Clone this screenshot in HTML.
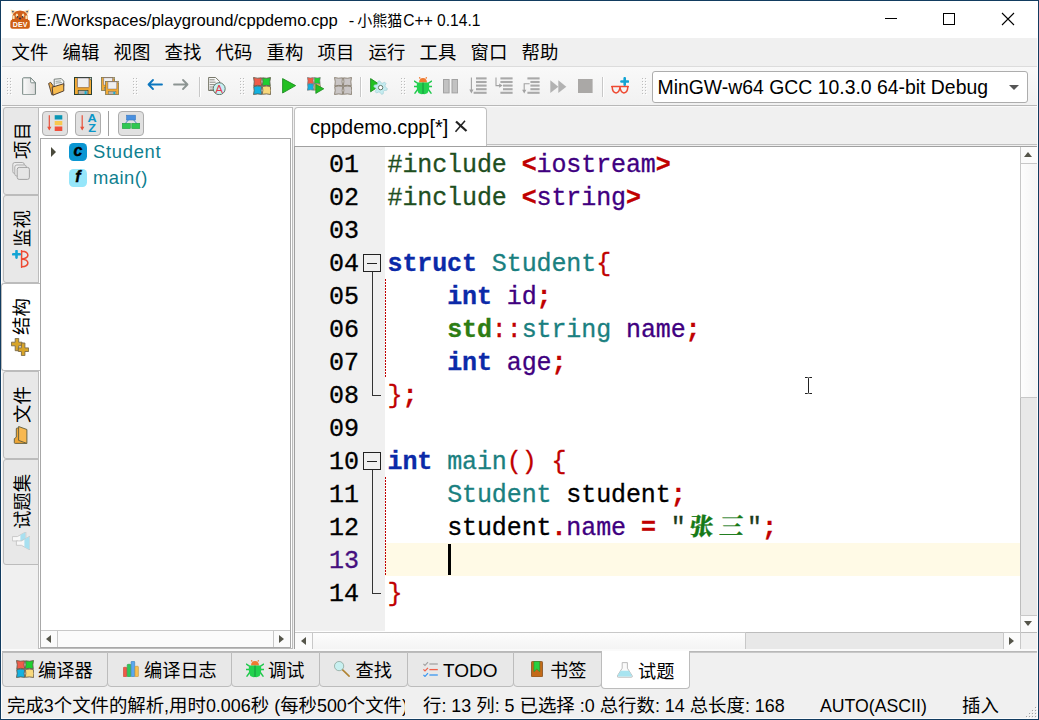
<!DOCTYPE html>
<html><head><meta charset="utf-8"><title>cppdemo</title>
<style>
*{box-sizing:border-box;margin:0;padding:0}
html,body{width:1039px;height:720px;overflow:hidden;background:#f0f0f0}
body{position:relative;font-family:"Liberation Sans","Noto Sans CJK SC",sans-serif;color:#000;font-size:18px}
.abs{position:absolute}
b{font-weight:normal}
#win{position:absolute;left:0;top:0;width:1039px;height:720px;border:1px solid #123c60;background:#f0f0f0;box-shadow:inset 0 0 0 1px #fcfcfc}
#title{position:absolute;left:1px;top:1px;width:1037px;height:37px;background:#fff}
#title .t{position:absolute;left:34.5px;top:8px;line-height:22px;white-space:pre}
#title .la{font-size:16.6px}
#title .lb{font-size:16.6px;margin-left:11px;margin-right:3px}
#title .cj{font-size:15px}
#title .lc{font-size:15.6px;margin-left:1px}
#menu{position:absolute;left:1px;top:38px;width:1036px;height:28px;background:#f0f0f0}
#menu span{position:absolute;top:1px;line-height:27px;font-size:18.4px;white-space:nowrap}
#tb{position:absolute;left:1px;top:66px;width:1037px;height:39px;background:linear-gradient(#f9f9f9,#f1f1f1);border-top:1px solid #dcdcdc}
#tbline{position:absolute;left:1px;top:105px;width:1037px;height:2px;background:#fafafa;border-top:1px solid #b8b8b8}
.grip{position:absolute;top:78px;width:1px;height:1px;background:#bcbcbc;box-shadow:1px 1px 0 #fff,0px 3px 0 #bcbcbc,1px 4px 0 #fff,0px 6px 0 #bcbcbc,1px 7px 0 #fff,0px 9px 0 #bcbcbc,1px 10px 0 #fff,0px 12px 0 #bcbcbc,1px 13px 0 #fff,0px 15px 0 #bcbcbc,1px 16px 0 #fff,3px 0px 0 #bcbcbc,4px 1px 0 #fff,3px 3px 0 #bcbcbc,4px 4px 0 #fff,3px 6px 0 #bcbcbc,4px 7px 0 #fff,3px 9px 0 #bcbcbc,4px 10px 0 #fff,3px 12px 0 #bcbcbc,4px 13px 0 #fff,3px 15px 0 #bcbcbc,4px 16px 0 #fff}
.vsep{position:absolute;top:77px;width:2px;height:20px;background:#fff;border-left:1px solid #c8c8c8}
#combo{position:absolute;left:652px;top:71px;width:376px;height:32px;border:1px solid #adadad;border-radius:3px;background:#fff}
#combo .t{position:absolute;left:4.5px;top:0;line-height:30px;font-size:19.4px;white-space:nowrap}
.vtab{position:absolute;left:3px;width:36px;background:#e8e8e8;border:1px solid #bcbcbc;border-radius:3px 0 0 3px}
.vtab.sel{left:1px;width:39px;background:#fff;border-right:none}
.vtab .r{position:absolute;left:-1px;transform-origin:0 0;transform:rotate(-90deg);white-space:nowrap;font-size:18.4px;display:flex;align-items:center;justify-content:center}
.vtab .r svg{margin-right:3px;flex:none}
.vtab .r span{line-height:20px;position:relative;top:1.5px}
#lpanel{position:absolute;left:38px;top:107px;width:255px;height:542px;background:#fff;border:1px solid #bcbcbc}
.pbtn{position:absolute;top:111px;width:26px;height:25px;background:#e1e1e1;border:1px solid #adadad;border-radius:4px}
#tree{position:absolute;left:40px;top:138px;width:251px;height:510px;background:#fff;border:1px solid #a8a8a8}
.ti{position:absolute;font-size:18.4px;line-height:26px;color:#0f7f8f;white-space:nowrap;letter-spacing:0.45px}
.ticon{position:absolute;width:18px;height:18px;border-radius:4.5px;text-align:center}
.ticon i{font-family:"Liberation Sans",sans-serif;font-weight:bold;font-style:italic;font-size:16px;line-height:15.500px;display:block;color:#000;-webkit-text-stroke:0.400px}
#etab{position:absolute;left:294px;top:107px;width:193px;height:39px;background:#fff;border:1px solid #c0c0c0;border-bottom:none;border-radius:4px 4px 0 0}
#etab .t{position:absolute;left:15px;top:0;line-height:38px;font-size:19.9px;white-space:nowrap}
#etabline{position:absolute;left:294px;top:144px;width:744px;height:1px;background:#c0c0c0}
#editor{position:absolute;left:294px;top:146px;width:744px;height:503px;background:#fff;border:1px solid #a0a0a0;border-right:none;border-bottom:none}
#gutter{position:absolute;left:295px;top:147px;width:90px;height:484px;background:#f0f0f0}
#code{position:absolute;left:295px;top:149px;width:725px;height:482px;font-family:"Liberation Mono","Noto Serif CJK SC",monospace;font-size:25px;letter-spacing:-0.1px;overflow:hidden;-webkit-text-stroke:0.3px}
#hl{position:absolute;left:385px;top:543px;width:635px;height:33px;background:#fffae6}
#caret{position:absolute;left:448px;top:544px;width:3px;height:31px;background:#000}
.ln{position:absolute;left:0;height:33px;width:725px;line-height:33px;white-space:pre}
.ln .n{position:absolute;left:34px;color:#000}
.ln .nc{color:#45107f}
.ln .c{position:absolute;left:92.5px}
.k{color:#0b2aa8;font-weight:bold}.p{color:#1f4f1f}.s{color:#c00000;font-weight:bold}.b{color:#c00000}.v{color:#400080}.t2{color:#1a8080}.ns{color:#2e7d14;font-weight:bold}.l{color:#000}.q{color:#1c3c1c}
.str{color:#177a17;font-weight:bold}
.str i{display:inline-block;width:30.7px;text-align:center;font-style:normal;font-size:24px;font-weight:900;transform:skewX(-6deg);letter-spacing:0;line-height:33px;vertical-align:top}
.fold{position:absolute;left:363px;width:18px;height:18px;border:1px solid #222;background:#f0f0f0}
.fold:after{content:"";position:absolute;left:3px;top:7.5px;width:10px;height:1px;background:#222}
.fl{position:absolute;background:#333}
.guide{position:absolute;left:385px;width:1px;background-image:repeating-linear-gradient(to bottom,#c00000 0,#c00000 2px,transparent 2px,transparent 3px)}
.sb{position:absolute;background:#e8e8e8}
.sbbtn{position:absolute;background:#fbfbfb;border:1px solid #c8c8c8}
.thumb{position:absolute;background:linear-gradient(to right,#fdfdfd,#f4f4f4);border:1px solid #c8c8c8}
.arr{position:absolute;width:0;height:0;border:4px solid transparent}
.arr.l{border-width:4.5px 5px 4.5px 0;border-right-color:#55554a}
.arr.r{border-width:4.5px 0 4.5px 5px;border-left-color:#55554a}
.arr.u{border-width:0 4.7px 5px 4.7px;border-bottom-color:#55554a}
.arr.d{border-width:5px 4.7px 0 4.7px;border-top-color:#55554a}
#bband{position:absolute;left:1px;top:649px;width:1037px;height:2px;background:#fafafa}
#btabs{position:absolute;left:1px;top:651px;width:1037px;height:2px;background:#b8b8b8;border-bottom:1px solid #c8c8c8}
.bt{position:absolute;top:652px;height:35px;background:#e8e8e8;border:1px solid #bcbcbc;border-radius:0 0 4px 4px}
.bt.sel{background:#fff;top:651px;height:38px;border-top:none}
.btt{position:absolute;font-size:18.2px;line-height:34px;white-space:nowrap}
.btt.lat{font-size:19px}
#status{position:absolute;left:1px;top:689px;width:1037px;height:30px;background:#f0f0f0}
.st{position:absolute;top:4px;line-height:26px;white-space:pre;font-size:18.4px}
.st b{font-size:17.9px}
.st b.u{font-size:17.7px}
#sgrip{position:absolute;left:1025px;top:18px;width:1px;height:1px;box-shadow:9px 0px 0 #a4a4a4,10px 1px 0 #fff,6px 3px 0 #a4a4a4,7px 4px 0 #fff,9px 3px 0 #a4a4a4,10px 4px 0 #fff,3px 6px 0 #a4a4a4,4px 7px 0 #fff,6px 6px 0 #a4a4a4,7px 7px 0 #fff,9px 6px 0 #a4a4a4,10px 7px 0 #fff,0px 9px 0 #a4a4a4,1px 10px 0 #fff,3px 9px 0 #a4a4a4,4px 10px 0 #fff,6px 9px 0 #a4a4a4,7px 10px 0 #fff,9px 9px 0 #a4a4a4,10px 10px 0 #fff}

#corner{position:absolute;left:1021px;top:633px;width:16px;height:16px;background:#f0f0f0}
.ib{position:absolute;background:#fcfcfc}

</style></head><body>
<div id="win"></div>
<div id="title"><span class="t"><span class="la">E:/Workspaces/playground/cppdemo.cpp</span><span class="lb">-</span><span class="cj">小熊猫</span><span class="lc">C++ 0.14.1</span></span>
<div class="abs" style="left:884px;top:17px;width:12px;height:1px;background:#000"></div>
<div class="abs" style="left:942px;top:12px;width:12px;height:12px;border:1px solid #000"></div>
<svg class="abs" style="left:1000px;top:11px" width="14" height="14" viewBox="0 0 14 14"><path d="M1 1l12 12M13 1l-12 12" stroke="#000" stroke-width="1.1"/></svg>
</div>
<svg class="abs" style="left:10px;top:9px;" width="20" height="20" viewBox="0 0 20 20"><path d="M2 5.800l-1.400-5.400 5.600 1.600zM18 5.800l1.400-5.400-5.600 1.600z" fill="#f8dca0"/>
<circle cx="2.900" cy="2.600" r="0.900" fill="#4a5078"/><circle cx="17.100" cy="2.600" r="0.900" fill="#4a5078"/>
<path d="M1.800 12q-0.600-10.600 8.200-10.600t8.200 10.600z" fill="#d0601a"/>
<rect x="0.300" y="10.800" width="19.500" height="9" rx="2.200" fill="#cf5f14"/>
<rect x="2.400" y="6.400" width="2.200" height="3.600" rx="0.600" fill="#f8e4b4"/><rect x="15.400" y="6.400" width="2.200" height="3.600" rx="0.600" fill="#f8e4b4"/>
<ellipse cx="6.900" cy="6.400" rx="1.200" ry="1.800" fill="#f8e4b4"/><ellipse cx="13.100" cy="6.400" rx="1.200" ry="1.800" fill="#f8e4b4"/>
<circle cx="7.400" cy="7.900" r="0.800" fill="#34303c"/><circle cx="12.600" cy="7.900" r="0.800" fill="#34303c"/>
<ellipse cx="10" cy="9.500" rx="1.200" ry="0.900" fill="#34384a"/>
<text x="10.100" y="18.300" font-family="Liberation Sans,sans-serif" font-weight="bold" font-size="8" fill="#fff" text-anchor="middle" textLength="14.500" lengthAdjust="spacingAndGlyphs">DEV</text></svg>
<div id="menu">
<span style="left:10.5px">文件</span>
<span style="left:61.5px">编辑</span>
<span style="left:112.5px">视图</span>
<span style="left:163.5px">查找</span>
<span style="left:214.5px">代码</span>
<span style="left:265.5px">重构</span>
<span style="left:316.5px">项目</span>
<span style="left:367.5px">运行</span>
<span style="left:418.5px">工具</span>
<span style="left:469.5px">窗口</span>
<span style="left:520.5px">帮助</span>
</div>
<div id="tb"></div>
<div class="grip" style="left:7px"></div>
<div class="grip" style="left:133px"></div>
<div class="grip" style="left:240px"></div>
<div class="grip" style="left:401px"></div>
<div class="grip" style="left:642px"></div>
<div class="vsep" style="left:199px"></div>
<div class="vsep" style="left:360px"></div>
<div class="vsep" style="left:602px"></div>
<svg class="abs" style="left:21.5px;top:77px;" width="15" height="18" viewBox="0 0 15 18"><defs><linearGradient id="gnew" x1="0" x2="1"><stop offset="0" stop-color="#fbfbfb"/><stop offset="1" stop-color="#dcdcdc"/></linearGradient></defs>
<path d="M1.5 0.8h7.200l4.700 5v11.200a0.800 0.800 0 0 1-0.800 0.800h-11.100a0.800 0.800 0 0 1-0.800-0.800v-15.400a0.800 0.800 0 0 1 0.800-0.800z" fill="url(#gnew)" stroke="#6f807c" stroke-width="1"/>
<path d="M8.700 0.800v4.200a0.800 0.800 0 0 0 0.800 0.800h3.900z" fill="#fff" stroke="#6f807c" stroke-width="0.9"/></svg>
<svg class="abs" style="left:47.5px;top:77.5px;" width="18" height="18" viewBox="0 0 18 18"><g transform="scale(0.950,1)"><path d="M6.5 1.2l7.5-0.6 2.6 2.6 0 5-10 2.6z" fill="#f4f4f4" stroke="#66706a" stroke-width="0.9"/>
<path d="M8 3.4l5.6-0.5M8 5.2l6.5-0.7" stroke="#8a9892" stroke-width="0.9"/>
<path d="M0.6 5.5l2.2-1.2 2.6 3.5 0.2 8.8-1.6 0.2z" fill="#f0a838" stroke="#4a3a30" stroke-width="0.9"/>
<path d="M4.4 9.2l12.2-3.5v7.2l-11.4 4.3z" fill="#f8bc50" stroke="#4a3a30" stroke-width="1"/></g></svg>
<svg class="abs" style="left:74px;top:77px;" width="18" height="18" viewBox="0 0 18 18"><rect x="0.5" y="0.5" width="17" height="17" fill="#f2aa36" stroke="#2a4032" stroke-width="1"/>
<path d="M15.6 0.5h1.9v2.2h-1.2z" fill="#f0f0f0" stroke="#2a4032" stroke-width="0.6"/>
<rect x="3.4" y="0.9" width="11.6" height="9.6" rx="0.8" fill="#efefef" stroke="#5b4a5b" stroke-width="0.6"/>
<rect x="3" y="10.6" width="12.2" height="1" fill="#e09a28"/>
<rect x="4.2" y="13.3" width="9.8" height="4" fill="#b8b4b4" stroke="#2a4032" stroke-width="0.7"/>
<rect x="10.6" y="14.2" width="2" height="3" fill="#10b0d0"/></svg>
<svg class="abs" style="left:101px;top:77px;" width="18" height="18" viewBox="0 0 18 18"><g transform="translate(0,0) scale(0.77)"><rect x="0.5" y="0.5" width="17" height="17" fill="#f2aa36" stroke="#7c744c" stroke-width="1"/>
<path d="M15.6 0.5h1.9v2.2h-1.2z" fill="#f0f0f0" stroke="#7c744c" stroke-width="0.6"/>
<rect x="3.4" y="0.9" width="11.6" height="9.6" rx="0.8" fill="#efefef" stroke="#5b4a5b" stroke-width="0.6"/>
<rect x="3" y="10.6" width="12.2" height="1" fill="#e09a28"/>
<rect x="4.2" y="13.3" width="9.8" height="4" fill="#b8b4b4" stroke="#7c744c" stroke-width="0.7"/>
<rect x="10.6" y="14.2" width="2" height="3" fill="#10b0d0"/></g><g transform="translate(4.2,4) scale(0.77)"><rect x="0.5" y="0.5" width="17" height="17" fill="#f2aa36" stroke="#7c744c" stroke-width="1"/>
<path d="M15.6 0.5h1.9v2.2h-1.2z" fill="#f0f0f0" stroke="#7c744c" stroke-width="0.6"/>
<rect x="3.4" y="0.9" width="11.6" height="9.6" rx="0.8" fill="#efefef" stroke="#5b4a5b" stroke-width="0.6"/>
<rect x="3" y="10.6" width="12.2" height="1" fill="#e09a28"/>
<rect x="4.2" y="13.3" width="9.8" height="4" fill="#b8b4b4" stroke="#7c744c" stroke-width="0.7"/>
<rect x="10.6" y="14.2" width="2" height="3" fill="#10b0d0"/></g></svg>
<svg class="abs" style="left:146.5px;top:77px;" width="16" height="15" viewBox="0 0 16 15"><path d="M15 7.5h-13.500M6 3l-4.500 4.500 4.500 4.500" fill="none" stroke="#0b76be" stroke-width="1.8" stroke-linecap="round" stroke-linejoin="round"/></svg>
<svg class="abs" style="left:173px;top:77px;" width="16" height="15" viewBox="0 0 16 15"><path d="M1 7.500h13.500M10 3l4.500 4.500-4.500 4.500" fill="none" stroke="#8c9492" stroke-width="1.8" stroke-linecap="round" stroke-linejoin="round"/></svg>
<svg class="abs" style="left:208px;top:77px;" width="18" height="18" viewBox="0 0 18 18"><path d="M0.6 0.5h7l4 4v9h-11z" fill="#f6f6f6" stroke="#6a6a5a" stroke-width="0.9"/>
<path d="M1.6 2.8h5M1.6 5.2h6M1.6 7.6h6M1.6 10h5M1.6 12.2h4" stroke="#8a8a80" stroke-width="1"/>
<circle cx="11.2" cy="11.7" r="6" fill="#c6f0f2" stroke="#56685a" stroke-width="0.9"/>
<text x="11.2" y="16" font-family="Liberation Sans,sans-serif" font-size="11.5" fill="#e23a4c" text-anchor="middle">A</text></svg>
<svg class="abs" style="left:253px;top:77px;" width="18" height="18" viewBox="0 0 18 18"><path d="M0.5 0.5q4 1.2 8 0.3q-0.9 4 0.2 8q-4-1-7.9 0.2q1-4.2-0.3-8.5z" fill="#f05c4a" stroke="#5a5040" stroke-width="0.8"/>
<path d="M9.5 0.8q4 1 8-0.3q-1.2 4.2-0.2 8.3q-4-1-8 0q1-4 0.2-8z" fill="#1ed030" stroke="#5a5040" stroke-width="0.8"/>
<path d="M0.7 9.6q4-1.2 8-0.2q-1 4 0 8q-4-1-8.2 0.1q1.2-4 0.2-7.9z" fill="#12b2e2" stroke="#5a5040" stroke-width="0.8"/>
<path d="M9.4 9.5q4-1 7.9 0q1 4 0.2 8q-4-1.1-8.2-0.2q1-4 0.1-7.8z" fill="#f8d87c" stroke="#5a5040" stroke-width="0.8"/></svg>
<svg class="abs" style="left:282px;top:78px;" width="15" height="16" viewBox="0 0 15 16"><path d="M0.6 0.6l13 7-13 7.4z" fill="#22c022" stroke="#1f8c22" stroke-width="0.9" stroke-linejoin="round"/></svg>
<svg class="abs" style="left:307px;top:77px;" width="18" height="18" viewBox="0 0 18 18"><g transform="scale(0.76)"><path d="M0.5 0.5q4 1.2 8 0.3q-0.9 4 0.2 8q-4-1-7.9 0.2q1-4.2-0.3-8.5z" fill="#f05c4a" stroke="#6a6a6a" stroke-width="0.8"/>
<path d="M9.5 0.8q4 1 8-0.3q-1.2 4.2-0.2 8.3q-4-1-8 0q1-4 0.2-8z" fill="#1ed030" stroke="#6a6a6a" stroke-width="0.8"/>
<path d="M0.7 9.6q4-1.2 8-0.2q-1 4 0 8q-4-1-8.2 0.1q1.2-4 0.2-7.9z" fill="#12b2e2" stroke="#6a6a6a" stroke-width="0.8"/>
<path d="M9.4 9.5q4-1 7.9 0q1 4 0.2 8q-4-1.1-8.2-0.2q1-4 0.1-7.8z" fill="#f8c860" stroke="#6a6a6a" stroke-width="0.8"/></g><path d="M8.8 7.4l8 4.4-8 4.6z" fill="#22c022" stroke="#1f8c22" stroke-width="0.8" stroke-linejoin="round"/></svg>
<svg class="abs" style="left:334px;top:77px;" width="18" height="18" viewBox="0 0 18 18"><path d="M0.5 0.5q4 1.2 8 0.3q-0.9 4 0.2 8q-4-1-7.9 0.2q1-4.2-0.3-8.5z" fill="#cac6c6" stroke="#7c7262" stroke-width="0.8"/>
<path d="M9.5 0.8q4 1 8-0.3q-1.2 4.2-0.2 8.3q-4-1-8 0q1-4 0.2-8z" fill="#cac6c6" stroke="#7c7262" stroke-width="0.8"/>
<path d="M0.7 9.6q4-1.2 8-0.2q-1 4 0 8q-4-1-8.2 0.1q1.2-4 0.2-7.9z" fill="#cac6c6" stroke="#7c7262" stroke-width="0.8"/>
<path d="M9.4 9.5q4-1 7.9 0q1 4 0.2 8q-4-1.1-8.2-0.2q1-4 0.1-7.8z" fill="#cac6c6" stroke="#7c7262" stroke-width="0.8"/></svg>
<svg class="abs" style="left:369.5px;top:78px;" width="18" height="18" viewBox="0 0 18 18"><path d="M0.6 0.6l10 6.6-10 6.6z" fill="#22c022" stroke="#1f8c22" stroke-width="0.9" stroke-linejoin="round"/>
<path d="M17.34,10.49L16.88,12.20L14.33,12.46L13.46,13.33L13.20,15.88L11.49,16.34L9.99,14.26L8.80,13.94L6.46,14.99L5.21,13.74L6.26,11.40L5.94,10.21L3.86,8.71L4.32,7.00L6.87,6.74L7.74,5.87L8.00,3.32L9.71,2.86L11.21,4.94L12.40,5.26L14.74,4.21L15.99,5.46L14.94,7.80L15.26,8.99z" fill="#c4ecf0" stroke="#a4d0d6" stroke-width="0.7" stroke-linejoin="round"/>
<circle cx="10.6" cy="9.6" r="2.2" fill="#fff" stroke="#5a6a5a" stroke-width="0.9"/></svg>
<svg class="abs" style="left:414px;top:77px;" width="18" height="18" viewBox="0 0 18 18"><path d="M3 5.8l-2.6-1.6M3 9.5h-2.8M3.6 12.5l-2.6 3.6M15 5.8l2.6-1.6M15 9.5h2.8M14.4 12.5l2.6 3.6" stroke="#22c84e" stroke-width="1.5" stroke-linecap="round"/>
<path d="M5 5.5q0.2-4.2 4-4.4q3.8 0.2 4 4.4z" fill="#f07a30"/>
<path d="M6.2 1.6l-0.8-1.4M11.8 1.6l0.8-1.4" stroke="#f07a30" stroke-width="1.2"/>
<path d="M3.2 5.4h11.6q1.4 5.4-1.2 10.6q-2.2 1.6-4.6 1q-2.4 0.6-4.6-1q-2.6-5.2-1.2-10.6z" fill="#22d24e"/>
<path d="M9 5.6v11.2" stroke="#158a3a" stroke-width="0.9"/></svg>
<svg class="abs" style="left:443px;top:78.5px;" width="15" height="15" viewBox="0 0 15 15"><rect x="0.5" y="0.5" width="5.6" height="13.4" fill="#c2c2c2" stroke="#a2a2a2"/><rect x="9" y="0.5" width="5.6" height="13.4" fill="#c2c2c2" stroke="#a2a2a2"/></svg>
<svg class="abs" style="left:468.5px;top:77.2px;" width="18" height="18" viewBox="0 0 18 18"><path d="M7 1.4H17.6" stroke="#a9a9a9" stroke-width="2.1"/><path d="M7 5.0H17.6" stroke="#a9a9a9" stroke-width="2.1"/><path d="M7 8.6H17.6" stroke="#a9a9a9" stroke-width="2.1"/><path d="M7 12.2H17.6" stroke="#a9a9a9" stroke-width="2.1"/><path d="M4.6 15.8H17.6" stroke="#a9a9a9" stroke-width="2.1"/><path d="M2.4 0.5V15" stroke="#a2a2a2" stroke-width="1.1"/><path d="M0.3 12.6h4.2l-2.1 3.8z" fill="#a2a2a2"/></svg>
<svg class="abs" style="left:495px;top:77.2px;" width="18" height="18" viewBox="0 0 18 18"><path d="M5.4 1.4H17.6" stroke="#a9a9a9" stroke-width="2.1"/><path d="M5.4 5.0H17.6" stroke="#a9a9a9" stroke-width="2.1"/><path d="M8 8.6H17.6" stroke="#a9a9a9" stroke-width="2.1"/><path d="M8 12.2H17.6" stroke="#a9a9a9" stroke-width="2.1"/><path d="M5.4 15.8H17.6" stroke="#a9a9a9" stroke-width="2.1"/><path d="M1 0.5V8.6H5" fill="none" stroke="#a2a2a2" stroke-width="1.1"/><path d="M4.2 6.4l3.4 2.2-3.4 2.2z" fill="#a2a2a2"/></svg>
<svg class="abs" style="left:522.4px;top:77.2px;" width="18" height="18" viewBox="0 0 18 18"><path d="M5.4 1.4H17.6" stroke="#a9a9a9" stroke-width="2.1"/><path d="M8.4 5.0H17.6" stroke="#a9a9a9" stroke-width="2.1"/><path d="M8.4 8.6H17.6" stroke="#a9a9a9" stroke-width="2.1"/><path d="M8.4 12.2H17.6" stroke="#a9a9a9" stroke-width="2.1"/><path d="M5.4 15.8H17.6" stroke="#a9a9a9" stroke-width="2.1"/><path d="M7.6 6.8H2.2V14" fill="none" stroke="#a2a2a2" stroke-width="1.1"/><path d="M0.1 12.8h4.2l-2.1 3.6z" fill="#a2a2a2"/></svg>
<svg class="abs" style="left:550px;top:80px;" width="17" height="14" viewBox="0 0 17 14"><path d="M0.3 0.3l8 6.4-8 6.4z" fill="#b2b2b2"/><path d="M8.3 0.3l8 6.4-8 6.4z" fill="#b2b2b2"/></svg>
<svg class="abs" style="left:577.5px;top:79px;" width="15" height="14" viewBox="0 0 15 14"><rect x="0" y="0" width="14.6" height="14" fill="#aaa8a6"/></svg>
<svg class="abs" style="left:611px;top:77px;" width="18" height="18" viewBox="0 0 18 18"><path d="M0.7 9.6H17.3M1.2 10q0.2 5.6 3.9 5.9q3.2-0.2 3.9-5.9M9 10q0.7 5.7 3.9 5.9q3.7-0.3 3.9-5.9" fill="none" stroke="#ee4a32" stroke-width="1.5" stroke-linecap="round" stroke-linejoin="round"/>
<path d="M13.7 1.2v6.6M10.4 4.5h6.6" stroke="#12a4d4" stroke-width="2.6" stroke-linecap="round"/></svg>
<div id="combo"><span class="t">MinGW-w64 GCC 10.3.0 64-bit Debug</span><div class="arr d" style="left:356px;top:13px;border-width:5.5px 5.3px 0 5.3px;border-top-color:#555"></div></div>
<div id="tbline"></div>
<div id="lpanel"></div>
<div class="vtab" style="top:107px;height:88px"><div class="r" style="top:87px;width:88px;height:36px"><svg width="18" height="18" viewBox="0 0 18 18"><rect x="6.5" y="0.8" width="11" height="11.500" rx="2" fill="#ececec" stroke="#a4a4a4" stroke-width="0.900"/>
<rect x="4" y="2.800" width="11" height="11.500" rx="2" fill="#eeeeee" stroke="#a4a4a4" stroke-width="0.900"/>
<rect x="0.600" y="5.200" width="12" height="12.200" rx="2" fill="#e6e6e6" stroke="#9a9a9a" stroke-width="0.900"/></svg><span>项目</span></div></div>
<div class="vtab" style="top:195px;height:88px"><div class="r" style="top:87px;width:88px;height:36px"><svg width="18" height="18" viewBox="0 0 18 18"><path d="M0.7 9.6H17.3M1.2 10q0.2 5.6 3.9 5.9q3.2-0.2 3.9-5.9M9 10q0.7 5.7 3.9 5.9q3.7-0.3 3.9-5.9" fill="none" stroke="#ee4a32" stroke-width="1.5" stroke-linecap="round" stroke-linejoin="round"/>
<path d="M13.7 1.2v6.6M10.4 4.5h6.6" stroke="#12a4d4" stroke-width="2.6" stroke-linecap="round"/></svg><span>监视</span></div></div>
<div class="vtab sel" style="top:283px;height:88px"><div class="r" style="top:87px;width:88px;height:38px"><svg width="18" height="18" viewBox="0 0 18 18"><path d="M5.3 4.2H10.2V0.4H13.8V4.2H17.6V7.7H13.8V11H10.2V7.7H5.3z" fill="#d8a428" stroke="#7a6a48" stroke-width="0.9" stroke-linejoin="round"/><path d="M0.4 10.4H4.5V7.3H8.1V10.4H13V13.9H8.1V17.6H4.5V13.9H0.4z" fill="#d8a428" stroke="#7a6a48" stroke-width="0.9" stroke-linejoin="round"/></svg><span>结构</span></div></div>
<div class="vtab" style="top:371px;height:88px"><div class="r" style="top:87px;width:88px;height:36px"><svg width="18" height="18" viewBox="0 0 18 18"><g transform="translate(0,-1)"><path d="M0.6 15.600V4.200q0-0.900 0.900-0.900h3.800l1.500 2h8.300q0.900 0 0.900 0.900v1.600z" fill="#eea636" stroke="#5c5a3c" stroke-width="0.900" stroke-linejoin="round"/>
<path d="M3.600 7.600h13.900l-3 8.300h-13.900z" fill="#f8b850" stroke="#5c5a3c" stroke-width="0.900" stroke-linejoin="round"/></g></svg><span>文件</span></div></div>
<div class="vtab" style="top:459px;height:106px"><div class="r" style="top:105px;width:106px;height:36px"><svg width="18" height="18" viewBox="0 0 18 18"><path d="M9.05 0.4h4.400v5l4.600 8.400h-13.600l4.600-8.400z" fill="#f8f8f8" stroke="#c0c0c0" stroke-width="0.800" stroke-linejoin="round"/>
<path d="M7.45 8.4h7.600l2.700 5h-13z" fill="#a8e0f0"/><path d="M4.7 4.4h4.400v5l4.600 8.400h-13.600l4.600-8.400z" fill="#f8f8f8" stroke="#c0c0c0" stroke-width="0.800" stroke-linejoin="round"/>
<path d="M3.10 12.4h7.600l2.700 5h-13z" fill="#a8e0f0"/></svg><span>试题集</span></div></div>
<div class="pbtn" style="left:42px"></div><div class="pbtn" style="left:75px"></div><div class="pbtn" style="left:118px"></div>
<div class="abs" style="left:108px;top:111px;width:1px;height:25px;background:#a0a0a0"></div>
<svg class="abs" style="left:46px;top:114px;" width="18" height="18" viewBox="0 0 18 18"><path d="M3.300 1.200v14" stroke="#e8503a" stroke-width="1.200"/><path d="M1.200 12.800h4.200l-2.100 3.600z" fill="#e8503a"/>
<rect x="8.700" y="1.200" width="7.600" height="4.300" fill="#0a96b4"/><rect x="8.700" y="7" width="7.600" height="4.200" fill="#f8c850"/><rect x="8.700" y="12.500" width="7.600" height="4.500" fill="#f0503c"/></svg>
<svg class="abs" style="left:79px;top:114px;" width="18" height="18" viewBox="0 0 18 18"><path d="M3.200 1.200v14" stroke="#e8503a" stroke-width="1.200"/><path d="M1.100 12.800h4.200l-2.100 3.600z" fill="#e8503a"/>
<text transform="translate(13.200,8.400) scale(1.180,1)" font-family="Liberation Sans,sans-serif" font-weight="bold" font-size="10.800" fill="#0a96c8" text-anchor="middle">A</text>
<text transform="translate(13.200,17.800) scale(1.180,1)" font-family="Liberation Sans,sans-serif" font-weight="bold" font-size="10.800" fill="#0a96c8" text-anchor="middle">Z</text></svg>
<svg class="abs" style="left:122px;top:114px;" width="18" height="18" viewBox="0 0 18 18"><path d="M6.500 5.800l-3.500 4M11.500 5.800l3.500 4" stroke="#3a7ac0" stroke-width="0.900"/>
<rect x="4.600" y="1.200" width="8.900" height="4.800" fill="#4a90e0" stroke="#3a7ac0" stroke-width="0.600"/>
<rect x="0.300" y="9.300" width="8" height="5.300" fill="#2ec850" stroke="#22a040" stroke-width="0.600"/><rect x="9.800" y="9.300" width="8" height="5.300" fill="#2ec850" stroke="#22a040" stroke-width="0.600"/></svg>
<div id="tree"></div>
<div class="arr r" style="left:51px;top:147px;border-width:5px 0 5px 5.500px;border-left-color:#4a4a3c"></div>
<div class="ticon" style="left:69px;top:143px;background:#0a96d2"><i>c</i></div><span class="ti" style="left:93px;top:139px;letter-spacing:0.700px">Student</span>
<div class="ticon" style="left:69px;top:169px;background:#96e6fa"><i>f</i></div><span class="ti" style="left:93px;top:165px">main()</span>
<div class="sbbtn" style="left:41px;top:630px;width:249px;height:17px;border-left:none;border-right:none;border-bottom:none"></div>
<div class="sbbtn" style="left:41px;top:630px;width:17px;height:17px;border-left:none;border-bottom:none"></div><div class="arr l" style="left:46px;top:634.500px"></div>
<div class="sbbtn" style="left:273px;top:630px;width:17px;height:17px;border-right:none;border-bottom:none"></div><div class="arr r" style="left:279px;top:634.500px"></div>
<div id="etabline"></div>
<div id="etab"><span class="t">cppdemo.cpp[*]</span><svg class="abs" style="left:159px;top:12px" width="14" height="13" viewBox="0 0 14 13"><path d="M2 1.500l10.500 9.500" stroke="#222" stroke-width="2.300"/><path d="M11 0.800l-9.500 11" stroke="#222" stroke-width="1.500"/></svg></div>
<div id="editor"></div><div id="gutter"></div><div id="hl"></div>
<div class="fold" style="top:254px"></div><div class="fl" style="left:372px;top:272px;width:1px;height:124px"></div><div class="fl" style="left:372px;top:395px;width:9px;height:1px"></div>
<div class="fold" style="top:452px"></div><div class="fl" style="left:372px;top:470px;width:1px;height:124px"></div><div class="fl" style="left:372px;top:593px;width:9px;height:1px"></div>
<div class="guide" style="top:279px;height:99px"></div><div class="guide" style="top:477px;height:99px"></div>
<div id="code">
<div class="ln" style="top:0px"><span class="n">01</span><span class="c"><span class="p">#include</span> <span class="s">&lt;</span><span class="v">iostream</span><span class="s">&gt;</span></span></div>
<div class="ln" style="top:33px"><span class="n">02</span><span class="c"><span class="p">#include</span> <span class="s">&lt;</span><span class="v">string</span><span class="s">&gt;</span></span></div>
<div class="ln" style="top:66px"><span class="n">03</span><span class="c"></span></div>
<div class="ln" style="top:99px"><span class="n">04</span><span class="c"><span class="k">struct</span> <span class="t2">Student</span><span class="b">{</span></span></div>
<div class="ln" style="top:132px"><span class="n">05</span><span class="c">    <span class="k">int</span> <span class="v">id</span><span class="s">;</span></span></div>
<div class="ln" style="top:165px"><span class="n">06</span><span class="c">    <span class="ns">std</span><span class="b">::</span><span class="t2">string</span> <span class="v">name</span><span class="s">;</span></span></div>
<div class="ln" style="top:198px"><span class="n">07</span><span class="c">    <span class="k">int</span> <span class="v">age</span><span class="s">;</span></span></div>
<div class="ln" style="top:231px"><span class="n">08</span><span class="c"><span class="b">}</span><span class="s">;</span></span></div>
<div class="ln" style="top:264px"><span class="n">09</span><span class="c"></span></div>
<div class="ln" style="top:297px"><span class="n">10</span><span class="c"><span class="k">int</span> <span class="t2">main</span><span class="b">()</span> <span class="b">{</span></span></div>
<div class="ln" style="top:330px"><span class="n">11</span><span class="c">    <span class="t2">Student</span> <span class="l">student</span><span class="s">;</span></span></div>
<div class="ln" style="top:363px"><span class="n">12</span><span class="c">    <span class="l">student</span><span class="s">.</span><span class="v">name</span> <span class="s">=</span> <span class="q">"</span><span class="str"><i>张</i><i>三</i></span><span class="q">"</span><span class="s">;</span></span></div>
<div class="ln" style="top:396px"><span class="n nc">13</span><span class="c">    </span></div>
<div class="ln" style="top:429px"><span class="n">14</span><span class="c"><span class="b">}</span></span></div>
</div>
<div id="caret"></div>
<svg class="abs" style="left:804px;top:377px" width="9" height="17" viewBox="0 0 9 17"><path d="M1 0.500h2.500q1 0 1 1v14q0 1-1 1h-2.500M8 0.500h-2.500q-1 0-1 1M8 16.500h-2.500q-1 0-1-1" fill="none" stroke="#222" stroke-width="1"/></svg>
<div class="sb" style="left:1020px;top:147px;width:17px;height:485px;border-left:1px solid #bcbcbc"></div>
<div class="sbbtn" style="left:1020px;top:147px;width:18px;height:17px;border-top:none;border-right:none"></div><div class="arr u" style="left:1024px;top:152px"></div>
<div class="thumb" style="left:1020px;top:163px;width:18px;height:235px;border-right:none"></div>
<div class="sbbtn" style="left:1020px;top:615px;width:18px;height:18px;border-right:none"></div><div class="arr d" style="left:1024px;top:621px"></div>
<div class="sb" style="left:295px;top:632px;width:742px;height:17px;border-top:1px solid #bcbcbc"></div>
<div class="sbbtn" style="left:295px;top:632px;width:18px;height:17px;border-left:none;border-bottom:none"></div><div class="arr l" style="left:301px;top:636.5px"></div>
<div class="thumb" style="left:312px;top:632px;width:434px;height:17px;border-bottom:none;background:linear-gradient(#fdfdfd,#f4f4f4)"></div>
<div class="sbbtn" style="left:1003px;top:632px;width:18px;height:17px;border-bottom:none"></div><div class="arr r" style="left:1009px;top:636.5px"></div>
<div id="corner"></div>
<div id="bband"></div><div id="btabs"></div>
<div class="bt" style="left:2px;width:106px"></div>
<svg class="abs" style="left:16px;top:660.0px" width="18" height="18" viewBox="0 0 18 18"><path d="M0.5 0.5q4 1.2 8 0.3q-0.9 4 0.2 8q-4-1-7.9 0.2q1-4.2-0.3-8.5z" fill="#f05c4a" stroke="#5a5040" stroke-width="0.8"/>
<path d="M9.5 0.8q4 1 8-0.3q-1.2 4.2-0.2 8.3q-4-1-8 0q1-4 0.2-8z" fill="#1ed030" stroke="#5a5040" stroke-width="0.8"/>
<path d="M0.7 9.6q4-1.2 8-0.2q-1 4 0 8q-4-1-8.2 0.1q1.2-4 0.2-7.9z" fill="#12b2e2" stroke="#5a5040" stroke-width="0.8"/>
<path d="M9.4 9.5q4-1 7.9 0q1 4 0.2 8q-4-1.1-8.2-0.2q1-4 0.1-7.8z" fill="#f8d87c" stroke="#5a5040" stroke-width="0.8"/></svg>
<span class="btt" style="left:38px;top:654px">编译器</span>
<div class="bt" style="left:107px;width:125px"></div>
<svg class="abs" style="left:123px;top:661.0px" width="16" height="16" viewBox="0 0 16 16"><rect x="0.3" y="6.3" width="3.6" height="9.4" rx="0.8" fill="#f05a48" stroke="#c84438" stroke-width="0.6"/>
<rect x="4.2" y="3.3" width="3.6" height="12.4" rx="0.8" fill="#30c858" stroke="#2a9a4c" stroke-width="0.6"/>
<rect x="8.1" y="0.3" width="3.6" height="15.4" rx="0.8" fill="#58a8f0" stroke="#3a7cb0" stroke-width="0.6"/>
<rect x="12" y="5.3" width="3.4" height="10.4" rx="0.8" fill="#f8c050" stroke="#c0903c" stroke-width="0.6"/></svg>
<span class="btt" style="left:144px;top:654px">编译日志</span>
<div class="bt" style="left:231px;width:89px"></div>
<svg class="abs" style="left:246px;top:660.0px" width="18" height="18" viewBox="0 0 18 18"><path d="M3 5.8l-2.6-1.6M3 9.5h-2.8M3.6 12.5l-2.6 3.6M15 5.8l2.6-1.6M15 9.5h2.8M14.4 12.5l2.6 3.6" stroke="#22c84e" stroke-width="1.5" stroke-linecap="round"/>
<path d="M5 5.5q0.2-4.2 4-4.4q3.8 0.2 4 4.4z" fill="#f07a30"/>
<path d="M6.2 1.6l-0.8-1.4M11.8 1.6l0.8-1.4" stroke="#f07a30" stroke-width="1.2"/>
<path d="M3.2 5.4h11.6q1.4 5.4-1.2 10.6q-2.2 1.6-4.6 1q-2.4 0.6-4.6-1q-2.6-5.2-1.2-10.6z" fill="#22d24e"/>
<path d="M9 5.6v11.2" stroke="#158a3a" stroke-width="0.9"/></svg>
<span class="btt" style="left:268px;top:654px">调试</span>
<div class="bt" style="left:319px;width:89px"></div>
<svg class="abs" style="left:334px;top:660.5px" width="17" height="17" viewBox="0 0 18 18"><path d="M8.6 8.8l7.4 7.2" stroke="#b08434" stroke-width="1.7" stroke-linecap="round"/>
<circle cx="5.4" cy="5.4" r="4.9" fill="#c8f0f0" stroke="#90aaa0" stroke-width="0.9"/></svg>
<span class="btt" style="left:355.5px;top:654px">查找</span>
<div class="bt" style="left:407px;width:107px"></div>
<svg class="abs" style="left:423px;top:661.0px" width="16" height="16" viewBox="0 0 16 16"><path d="M0.4 2.8l1.6 1.6 3-3.2" fill="none" stroke="#a2a2a2" stroke-width="1.2"/><path d="M6.4 3h8.4" stroke="#a2a2a2" stroke-width="1.3"/>
<path d="M0.4 8.400l1.600 1.600 3-3.200" fill="none" stroke="#f0604a" stroke-width="1.200"/><path d="M6.400 8.600h8.400" stroke="#f0604a" stroke-width="1.300"/>
<path d="M0.400 13.800l1.600 1.600 3-3.200" fill="none" stroke="#3a96f0" stroke-width="1.200"/><path d="M6.400 14h8.400" stroke="#3a96f0" stroke-width="1.300"/></svg>
<span class="btt lat" style="left:443px;top:654px">TODO</span>
<div class="bt" style="left:513px;width:89px"></div>
<svg class="abs" style="left:531px;top:661.0px" width="16" height="16" viewBox="0 0 16 16"><rect x="0.500" y="0.500" width="11" height="15.400" rx="0.800" fill="#c46a18" stroke="#8a5a2c" stroke-width="0.9"/>
<path d="M2.900 0.500v10.200l2.900-2.600 2.900 2.600v-10.200z" fill="#28d040" stroke="#1c8a2c" stroke-width="0.500"/></svg>
<span class="btt" style="left:550px;top:654px">书签</span>
<div class="bt sel" style="left:601px;width:89px"></div>
<svg class="abs" style="left:617px;top:662.0px" width="16" height="16" viewBox="0 0 16 16"><path d="M5.200 0.600h5.200v5.600l4.800 7.600q0.600 1.400-0.900 1.400h-13q-1.500 0-0.900-1.400l4.800-7.600z" fill="#fafafa" stroke="#b4b4b4" stroke-width="0.900" stroke-linejoin="round"/>
<path d="M3.700 8.800h8.200l2.900 4.700q0.400 1-0.600 1h-12.800q-1 0-0.600-1z" fill="#a8e4f0"/></svg>
<span class="btt" style="left:638px;top:655px">试题</span>
<div id="status">
<span class="st" style="left:6px;width:398px;overflow:hidden">完成<b>3</b>个文件的解析<b>,</b>用时<b>0.006</b>秒 <b>(</b>每秒<b>500</b>个文件<b>)</b></span>
<span class="st" style="left:422px">行<b>: 13 </b>列<b>: 5 </b>已选择 <b>:0 </b>总行数<b>: 14 </b>总长度<b>: 168</b></span>
<span class="st" style="left:819px"><b class="u">AUTO(ASCII)</b></span>
<span class="st" style="left:961px">插入</span>
<div id="sgrip"></div>
</div>
<div class="ib" style="left:1037px;top:38px;width:1px;height:681px"></div><div class="ib" style="left:1px;top:718px;width:1037px;height:1px"></div><div class="ib" style="left:1px;top:38px;width:1px;height:245px"></div><div class="ib" style="left:1px;top:371px;width:1px;height:348px"></div>
</body></html>
